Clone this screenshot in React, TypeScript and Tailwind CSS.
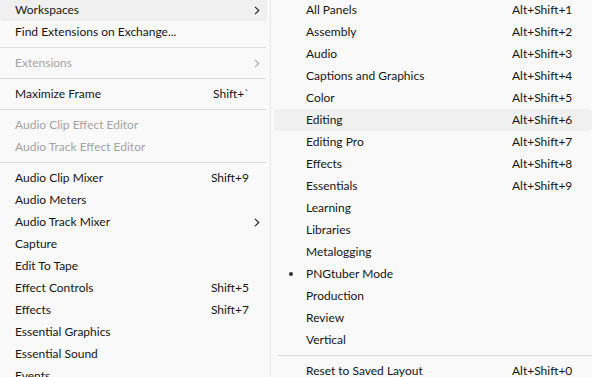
import React from 'react';

type Item =
  | { kind: 'sep' }
  | { kind: 'item'; label: string; shortcut?: string; sub?: boolean; disabled?: boolean; hover?: boolean; bullet?: boolean };

const sep: Item = { kind: 'sep' };
const it = (label: string, extra: Partial<Omit<Extract<Item, { kind: 'item' }>, 'kind' | 'label'>> = {}): Item => ({
  kind: 'item',
  label,
  ...extra,
});

const mainItems: Item[] = [
  it('Workspaces', { sub: true, hover: true }),
  it('Find Extensions on Exchange...'),
  sep,
  it('Extensions', { sub: true, disabled: true }),
  sep,
  it('Maximize Frame', { shortcut: 'Shift+`' }),
  sep,
  it('Audio Clip Effect Editor', { disabled: true }),
  it('Audio Track Effect Editor', { disabled: true }),
  sep,
  it('Audio Clip Mixer', { shortcut: 'Shift+9' }),
  it('Audio Meters'),
  it('Audio Track Mixer', { sub: true }),
  it('Capture'),
  it('Edit To Tape'),
  it('Effect Controls', { shortcut: 'Shift+5' }),
  it('Effects', { shortcut: 'Shift+7' }),
  it('Essential Graphics'),
  it('Essential Sound'),
  it('Events'),
];

const workspaceItems: Item[] = [
  it('All Panels', { shortcut: 'Alt+Shift+1' }),
  it('Assembly', { shortcut: 'Alt+Shift+2' }),
  it('Audio', { shortcut: 'Alt+Shift+3' }),
  it('Captions and Graphics', { shortcut: 'Alt+Shift+4' }),
  it('Color', { shortcut: 'Alt+Shift+5' }),
  it('Editing', { shortcut: 'Alt+Shift+6', hover: true }),
  it('Editing Pro', { shortcut: 'Alt+Shift+7' }),
  it('Effects', { shortcut: 'Alt+Shift+8' }),
  it('Essentials', { shortcut: 'Alt+Shift+9' }),
  it('Learning'),
  it('Libraries'),
  it('Metalogging'),
  it('PNGtuber Mode', { bullet: true }),
  it('Production'),
  it('Review'),
  it('Vertical'),
  sep,
  it('Reset to Saved Layout', { shortcut: 'Alt+Shift+0' }),
];

const Chevron = ({ disabled }: { disabled?: boolean }) => (
  <svg width="6" height="9" viewBox="0 0 6 9" fill="none" className="shrink-0">
    <path d="M1 0.8 L4.8 4.5 L1 8.2" stroke={disabled ? '#a8a8a8' : '#1f1f1f'} strokeWidth="1.1" />
  </svg>
);

const MainMenu = () => (
  <div className="w-[270px] shrink-0 bg-[#f9f9f9] -mt-px">
    {mainItems.map((item, i) =>
      item.kind === 'sep' ? (
        <div key={i} className="h-[9px] flex items-center">
          <div className="h-px w-[266px] bg-[#dcdcdc]" />
        </div>
      ) : (
        <div
          key={i}
          className={`h-[22px] mr-[3px] flex items-center pl-[15px] pr-[7px] rounded-[3px] ${
            item.hover ? 'bg-[#f0f0f0]' : ''
          } ${item.disabled ? 'text-[#a3a3a3]' : 'text-[#161616]'}`}
        >
          <span className="flex-1 whitespace-nowrap">{item.label}</span>
          {item.shortcut && <span className="whitespace-nowrap mr-[11px]">{item.shortcut}</span>}
          {item.sub && <Chevron disabled={item.disabled} />}
        </div>
      )
    )}
  </div>
);

const SubMenu = () => (
  <div className="flex-1 bg-[#f9f9f9] border-l border-[#e6e6e6] -mt-px">
    {workspaceItems.map((item, i) =>
      item.kind === 'sep' ? (
        <div key={i} className="h-[9px] flex items-center pl-[7px]">
          <div className="h-px flex-1 bg-[#dcdcdc]" />
        </div>
      ) : (
        <div
          key={i}
          className={`h-[22px] ml-[3px] flex items-center rounded-[4px] text-[#161616] ${
            item.hover ? 'bg-[#f0f0f0]' : ''
          }`}
        >
          <span className="w-[32px] flex justify-center pl-[2px]">
            {item.bullet && <span className="w-[4px] h-[4px] rounded-full bg-[#333]" />}
          </span>
          <span className="flex-1 whitespace-nowrap">{item.label}</span>
          {item.shortcut && <span className="whitespace-nowrap w-[80px]">{item.shortcut}</span>}
        </div>
      )
    )}
  </div>
);

export default function App() {
  return (
    <div
      className="w-[592px] h-[377px] overflow-hidden flex bg-[#f9f9f9] text-[12px]"
      style={{ fontFamily: '"Segoe UI", Lato, sans-serif' }}
    >
      <MainMenu />
      <SubMenu />
    </div>
  );
}
